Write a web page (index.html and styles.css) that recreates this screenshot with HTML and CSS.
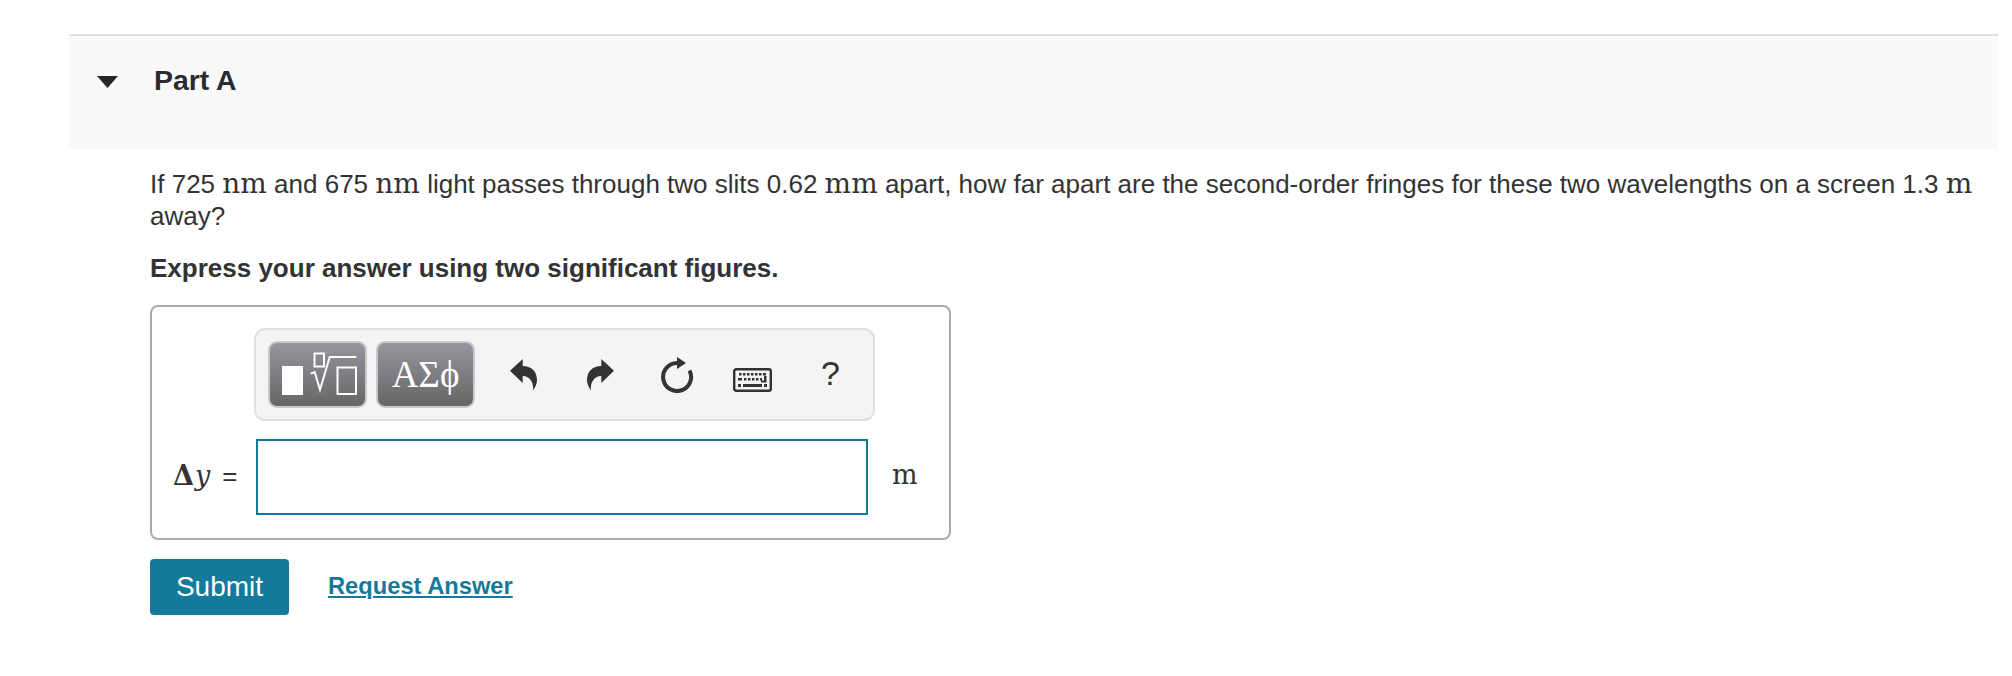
FILE: index.html
```html
<!DOCTYPE html>
<html lang="en">
<head>
<meta charset="utf-8">
<title>Part A</title>
<link rel="stylesheet" href="styles.css">
</head>
<body>
<main class="page">
  <header class="part-head">
    <svg class="caret" width="21" height="12" viewBox="0 0 21 12"><path d="M0 0H21L10.500 12Z"/></svg>
    <h2 class="part-title">Part A</h2>
  </header>
  <section class="part-body">
    <p class="question">If 725 <span class="unit">nm</span> and 675 <span class="unit">nm</span> light passes through two slits 0.62 <span class="unit">mm</span> apart, how far apart are the second-order fringes for these two wavelengths on a screen 1.3 <span class="unit">m</span> away?</p>
    <p class="instruction">Express your answer using two significant figures.</p>
    <div class="answer-box">
      <div class="toolbar">
        <button class="tpl-btn" type="button" aria-label="Templates">
          <svg width="95" height="63" viewBox="2 2 95 63">
            <rect class="fill" x="14" y="25" width="21" height="29"/>
            <rect class="line" x="46.5" y="12.5" width="9.5" height="13"/>
            <path class="line" d="M42.7 32.7L46.7 31L52 48.7L61.7 16H88.3"/>
            <rect class="line" x="69.5" y="26.5" width="18.5" height="26.5"/>
          </svg>
        </button>
        <button class="tpl-btn greek" type="button">ΑΣϕ</button>
        <svg class="tool undo" width="27" height="32" viewBox="0 0 27 32"><path d="M0 11.7L12.7 0V7C21 7 27 12 27 21C27 25 25 29 23 31.5C24 24 20 17 12.7 17V24Z"/></svg>
        <svg class="tool redo" width="27" height="32" viewBox="0 0 27 32"><path d="M27 11.7L14.3 0V7C6 7 0 12 0 21C0 25 2 29 4 31.5C3 24 7 17 14.3 17V24Z"/></svg>
        <svg class="tool reload" width="33" height="36" viewBox="0 0 33 36">
          <path class="ring" d="M16 6A14 14 0 1 0 28.5 13.5"/>
          <path d="M16 0L25 6L16 12Z"/>
        </svg>
        <svg class="tool keyboard" width="39" height="24" viewBox="0 0 39 24">
          <rect class="kb-case" x="1.200" y="1.200" width="36.600" height="21.600" rx="2"/>
          <path d="M6 5h2.500v2.500H6zM10 5h2.500v2.500h-2.500zM14 5h2.500v2.500h-2.500zM18 5h2.500v2.500h-2.500zM22 5h2.500v2.500h-2.500zM26 5h2.500v2.500h-2.500zM30 5h3v2.500h-3zM5 10h4v2.500H5zM11 10h2.500v2.500h-2.500zM15 10h2.500v2.500h-2.500zM19 10h2.500v2.500h-2.500zM23 10h2.500v2.500h-2.500zM27 10h2v2.500h-2zM31 8h2.500v6.500H28v-2h3zM5 16h3v3H5zM10 16h19v3H10zM31 16h3v3h-3z"/>
        </svg>
        <span class="help">?</span>
      </div>
      <div class="answer-row">
        <label class="answer-label" for="answer"><span class="delta">Δ</span><i class="var">y</i><span class="eq">=</span></label>
        <input class="answer-input" id="answer" type="text">
        <span class="unit answer-unit">m</span>
      </div>
    </div>
    <div class="actions">
      <button class="submit" type="button">Submit</button>
      <a class="request" href="#">Request Answer</a>
    </div>
  </section>
</main>
</body>
</html>
```

FILE: styles.css
```css
* { box-sizing: border-box; }
html, body { margin: 0; background: #fff; }
body { font-family: "Liberation Sans", Arial, sans-serif; color: #333; }
.page { padding: 34px 14px 0 69px; }

.part-head {
  display: flex;
  align-items: flex-start;
  height: 115px;
  padding: 28px 0 0 28px;
  background: #f9f9f9;
  border-top: 2px solid #e0e0e0;
}
.caret { margin-top: 12px; fill: #272727; flex: none; }
.part-title { margin: 0 0 0 36px; font-size: 28.4px; line-height: 32px; font-weight: 700; color: #2b2b2b; }

.part-body { padding: 19px 0 0 81px; }
.question { margin: 0; font-size: 26px; line-height: 32px; }
.unit { font-family: "DejaVu Serif", serif; font-size: 28px; line-height: 1; }
.instruction { margin: 20px 0 21px; font-size: 26px; line-height: 32px; font-weight: 700; }

.answer-box {
  width: 801px;
  height: 235px;
  padding: 21px 0 0;
  border: 2px solid #aaa;
  border-radius: 8px;
}
.toolbar {
  display: flex;
  align-items: center;
  width: 621px;
  height: 93px;
  margin-left: 102px;
  padding-left: 12px;
  background: #f4f4f4;
  border: 2px solid #e0e0e0;
  border-radius: 11px;
}
.tpl-btn {
  display: flex;
  align-items: center;
  justify-content: center;
  width: 99px;
  height: 67px;
  margin-right: 9px;
  padding: 0;
  border: 2px solid #c9c9c9;
  border-radius: 9px;
  background: linear-gradient(#97959e, #666);
}
.tpl-btn .fill { fill: #fff; }
.tpl-btn .line { fill: none; stroke: #fff; stroke-width: 2; }
.greek {
  margin-right: 0;
  color: #fff;
  font-family: "Liberation Serif", serif;
  font-size: 37px;
}
.tool { flex: none; fill: #333; }
.undo { margin-left: 35px; }
.redo { margin-left: 50px; }
.reload { margin-left: 47px; }
.reload .ring { fill: none; stroke: #333; stroke-width: 4; }
.keyboard { margin: 10px 0 0 39px; }
.kb-case { fill: none; stroke: #333; stroke-width: 2.4; }
.help { margin: 0 0 4px 49px; font-size: 34px; line-height: 40px; color: #333; }

.answer-row { display: flex; align-items: center; margin-top: 18px; }
.answer-label {
  display: flex;
  align-items: baseline;
  width: 104px;
  margin-bottom: 2px;
  padding-left: 21px;
  font-size: 26px;
}
.delta { font-family: "DejaVu Serif", serif; font-weight: 700; font-size: 27px; }
.var { margin-left: 1px; font-family: "DejaVu Serif", serif; font-size: 27px; }
.eq { margin-left: 12px; font-size: 26px; }
.answer-input {
  width: 612px;
  height: 76px;
  padding: 0 8px;
  border: 2px solid #13789b;
  border-radius: 0;
  background: #fff;
  outline: none;
}
.answer-unit { margin: 0 0 5px 24px; font-size: 27px; }

.actions { display: flex; align-items: center; margin-top: 19px; }
.submit {
  width: 139px;
  height: 56px;
  padding: 0;
  border: 0;
  border-radius: 4px;
  background: #147a9b;
  color: #fff;
  font-family: "Liberation Sans", Arial, sans-serif;
  font-size: 28px;
}
.request {
  margin: 0 0 2px 39px;
  color: #147a9b;
  font-size: 23.7px;
  font-weight: 700;
  text-decoration: underline;
}
```
